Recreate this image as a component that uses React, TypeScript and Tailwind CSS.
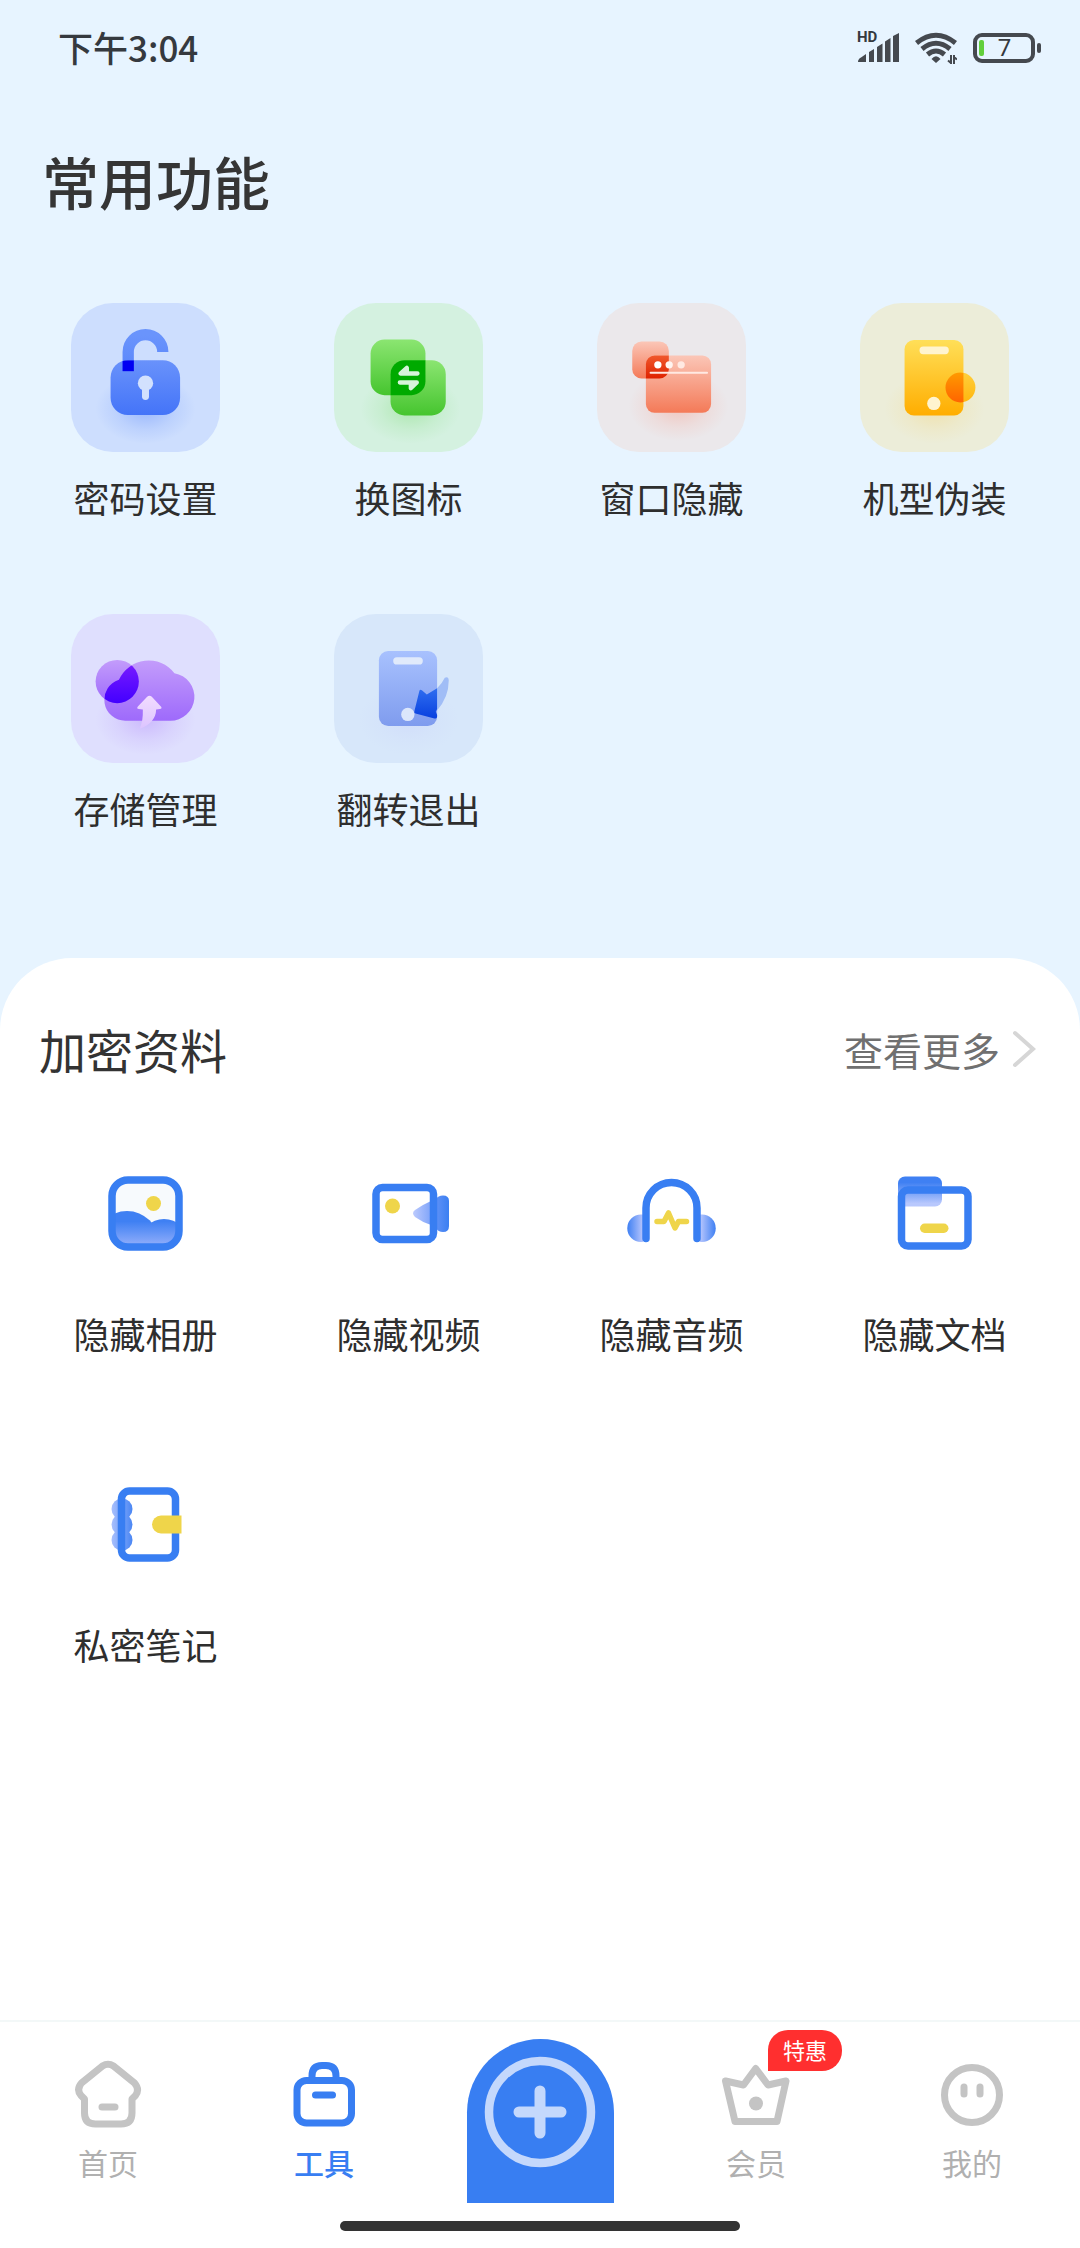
import type { ReactNode } from "react";

const BLUE = "#387ef2";
const YELLOW = "#efd54a";

function Gradient({ id, from, to, horizontal = false }: { id: string; from: string; to: string; horizontal?: boolean }) {
  return (
    <linearGradient id={id} x1="0" y1="0" x2={horizontal ? "1" : "0"} y2={horizontal ? "0" : "1"}>
      <stop offset="0" stopColor={from} />
      <stop offset="1" stopColor={to} />
    </linearGradient>
  );
}

function Glow({ id, color, cx = 224, cy = 318 }: { id: string; color: string; cx?: number; cy?: number }) {
  return (
    <>
      <radialGradient id={id}>
        <stop offset="0" stopColor={color} stopOpacity="0.45" />
        <stop offset="0.6" stopColor={color} stopOpacity="0.14" />
        <stop offset="1" stopColor={color} stopOpacity="0" />
      </radialGradient>
      <ellipse cx={cx} cy={cy} rx="150" ry="105" fill={`url(#${id})`} />
    </>
  );
}

function TileSvg({ children }: { children: ReactNode }) {
  return (
    <svg viewBox="0 0 448 448" className="size-full" aria-hidden="true">
      {children}
    </svg>
  );
}

function LockIcon() {
  return (
    <TileSvg>
      <Glow id="lk-glow" color="#5b88fa" />
      <defs>
        <Gradient id="lk-ring" from="#6a94fc" to="#5a86fb" />
        <Gradient id="lk-body" from="#6992fb" to="#4474f8" />
        <clipPath id="lk-clip">
          <rect x="119" y="172" width="209" height="165" rx="52" />
        </clipPath>
      </defs>
      <path d="M172 205 V147 A52 52 0 0 1 276 147" fill="none" stroke="url(#lk-ring)" strokeWidth="34" />
      <rect x="119" y="172" width="209" height="165" rx="52" fill="url(#lk-body)" />
      <rect x="155" y="172" width="34" height="33" fill="#0000f2" clipPath="url(#lk-clip)" />
      <circle cx="224" cy="241" r="23" fill="#d2e1fe" />
      <path d="M224 245 V281" stroke="#d2e1fe" strokeWidth="21" strokeLinecap="round" />
    </TileSvg>
  );
}

function SwapIcon() {
  return (
    <TileSvg>
      <Glow id="sw-glow" color="#7ddb74" cx={230} />
      <defs>
        <Gradient id="sw-a" from="#8be571" to="#46c52f" />
      </defs>
      <rect x="110" y="110" width="165" height="167" rx="42" fill="url(#sw-a)" />
      <rect x="170" y="172" width="166" height="166" rx="42" fill="url(#sw-a)" />
      <path d="M170 214 A42 42 0 0 1 212 172 H275 V235 A42 42 0 0 1 233 277 H170 Z" fill="#00aa00" />
      <path
        d="M251 212 H200 L219 195 V212 M198 239 H249 L231 256 V239"
        fill="#d6f4da"
        stroke="#d6f4da"
        strokeWidth="13"
        strokeLinecap="round"
        strokeLinejoin="round"
      />
    </TileSvg>
  );
}

function WindowIcon() {
  return (
    <TileSvg>
      <Glow id="wi-glow" color="#f79a86" cx={245} cy={310} />
      <defs>
        <Gradient id="wi-a" from="#fbc6b7" to="#f47a58" />
        <Gradient id="wi-b" from="#f0582c" to="#df2200" />
      </defs>
      <rect x="106" y="116" width="110" height="111" rx="28" fill="url(#wi-a)" />
      <rect x="147" y="158" width="196" height="172" rx="26" fill="url(#wi-a)" />
      <path d="M147 184 A26 26 0 0 1 173 158 H216 V199 A28 28 0 0 1 188 227 H147 Z" fill="url(#wi-b)" />
      <circle cx="183" cy="186" r="11" fill="#fff" />
      <circle cx="217" cy="186" r="11" fill="#fff4f0" />
      <circle cx="253" cy="186" r="11" fill="#ffe9e2" />
      <path d="M161 210 H331" stroke="#ffe9e2" strokeWidth="6" strokeLinecap="round" />
    </TileSvg>
  );
}

function PhoneIcon() {
  return (
    <TileSvg>
      <Glow id="ph-glow" color="#f3d478" />
      <defs>
        <Gradient id="ph-a" from="#ffdf58" to="#ffad00" />
        <Gradient id="ph-b" from="#ffce3c" to="#ffb70e" />
        <Gradient id="ph-c" from="#ff9a00" to="#ff6400" />
        <clipPath id="ph-clip">
          <rect x="134" y="111" width="177" height="227" rx="28" />
        </clipPath>
      </defs>
      <rect x="134" y="111" width="177" height="227" rx="28" fill="url(#ph-a)" />
      <rect x="179" y="131" width="88" height="23" rx="11" fill="#fff4cf" />
      <circle cx="222" cy="302" r="20" fill="#fff4cf" />
      <circle cx="302" cy="254" r="45" fill="url(#ph-b)" />
      <circle cx="302" cy="254" r="45" fill="url(#ph-c)" clipPath="url(#ph-clip)" />
    </TileSvg>
  );
}

function CloudIcon() {
  const cloud = "M164 321 A63 63 0 0 1 144 198 A98 98 0 0 1 311 178 A72 72 0 0 1 298 321 Z";
  return (
    <TileSvg>
      <Glow id="cl-glow" color="#b48cfb" />
      <defs>
        <Gradient id="cl-a" from="#c39cfb" to="#9e6afb" />
        <Gradient id="cl-b" from="#7d1dff" to="#4300ff" />
        <Gradient id="cl-c" from="#f2dcff" to="#dcc4ff" />
        <clipPath id="cl-clip">
          <path d={cloud} />
        </clipPath>
      </defs>
      <circle cx="139" cy="203" r="65" fill="url(#cl-a)" />
      <path d={cloud} fill="url(#cl-a)" />
      <circle cx="139" cy="203" r="65" fill="url(#cl-b)" clipPath="url(#cl-clip)" />
      <path
        d="M229 249 Q236 242 243 249 L271 279 Q275 285 267 286 L256 287 Q255 327 207 345 Q217 320 216 287 L204 286 Q196 284 201 278 Z"
        fill="url(#cl-c)"
      />
    </TileSvg>
  );
}

function FlipIcon() {
  return (
    <TileSvg>
      <Glow id="fl-glow" color="#c9d2fb" />
      <defs>
        <Gradient id="fl-a" from="#a8c1fe" to="#7f9cee" />
        <Gradient id="fl-b" from="#2f6ef0" to="#0940df" />
      </defs>
      <rect x="135" y="111" width="175" height="226" rx="28" fill="url(#fl-a)" />
      <rect x="178" y="130" width="89" height="22" rx="11" fill="#e0eafb" />
      <circle cx="222" cy="302" r="20" fill="#dbe6fb" />
      <path d="M310 223 Q326 208 333 192 Q344 186 345 200 Q345 250 310 290 Z" fill="#a0bdf6" />
      <path
        d="M257 230 Q260 226 265 230 L279 242 L310 223 V286 L306 294 L310 304 Q311 317 302 314 L245 299 Q239 297 242 291 Z"
        fill="url(#fl-b)"
      />
    </TileSvg>
  );
}

function LineSvg({ children }: { children: ReactNode }) {
  return (
    <svg viewBox="0 0 149 149" className="size-full" fill="none" aria-hidden="true">
      {children}
    </svg>
  );
}

function PhotoIcon() {
  return (
    <LineSvg>
      <defs>
        <linearGradient id="pt-a" gradientUnits="userSpaceOnUse" x1="0" y1="72" x2="0" y2="107">
          <stop offset="0.3" stopColor="#3f80f3" />
          <stop offset="1" stopColor="#93affb" />
        </linearGradient>
        <clipPath id="pt-clip">
          <rect x="42" y="42" width="66" height="66" rx="14" />
        </clipPath>
      </defs>
      <rect x="41" y="41" width="67" height="67" rx="16" fill="#f7fafd" />
      <g clipPath="url(#pt-clip)" fill="url(#pt-a)">
        <circle cx="93" cy="104" r="24" />
        <circle cx="56" cy="104" r="32" />
      </g>
      <circle cx="82.5" cy="64.5" r="7.5" fill={YELLOW} />
      <rect x="41" y="41" width="67" height="67" rx="16" stroke={BLUE} strokeWidth="7.5" />
    </LineSvg>
  );
}

function VideoIcon() {
  return (
    <LineSvg>
      <defs>
        <Gradient id="vd-a" from="#bccafd" to="#7fa4f9" horizontal />
        <Gradient id="vd-b" from="#5f91f6" to="#3a7ff2" horizontal />
      </defs>
      <path d="M97 62 Q88 66 81 71 Q77 74 81 78 Q88 83 97 86 Z" fill="url(#vd-a)" />
      <path d="M102 60 Q104 56.500 109 56.500 Q115 56.500 115 62 V87 Q115 93 109 93 Q104 93 102 89 Z" fill="url(#vd-b)" />
      <circle cx="58.500" cy="67" r="7.500" fill={YELLOW} />
      <rect x="42" y="48.500" width="57.500" height="52" rx="6.500" stroke={BLUE} strokeWidth="7.500" />
    </LineSvg>
  );
}

function AudioIcon() {
  return (
    <LineSvg>
      <defs>
        <Gradient id="au-a" from="#3f80f3" to="#b8c6fd" horizontal />
        <Gradient id="au-b" from="#b8c6fd" to="#3f80f3" horizontal />
      </defs>
      <path d="M46 75.500 H44 A13.700 13.700 0 0 0 44 103 H46 Z" fill="url(#au-a)" />
      <path d="M103 75.500 H105 A13.700 13.700 0 0 1 105 103 H103 Z" fill="url(#au-b)" />
      <path d="M49 99.500 V69 A25.500 25.500 0 0 1 100 69 V99.500" stroke={BLUE} strokeWidth="7.500" strokeLinecap="round" />
      <path
        d="M60 82.500 H67 L71.500 74 L78 89 L81.500 82.500 H89.500"
        stroke={YELLOW}
        strokeWidth="5.500"
        strokeLinecap="round"
        strokeLinejoin="round"
      />
    </LineSvg>
  );
}

function FolderIcon() {
  return (
    <LineSvg>
      <defs>
        <linearGradient id="fo-a" x1="0" y1="0" x2="0" y2="1">
          <stop offset="0.2" stopColor="#3f80f3" />
          <stop offset="0.9" stopColor="#b8c8fd" />
        </linearGradient>
      </defs>
      <rect x="38" y="37.500" width="44" height="30" rx="7" fill="url(#fo-a)" />
      <rect x="41.500" y="51" width="66.500" height="56" rx="6.500" stroke={BLUE} strokeWidth="7.500" />
      <rect x="60" y="84.500" width="28.500" height="9.500" rx="4.700" fill={YELLOW} />
    </LineSvg>
  );
}

function NotebookIcon() {
  return (
    <LineSvg>
      <defs>
        <Gradient id="nb-a" from="#a9c0fc" to="#4a86f4" horizontal />
      </defs>
      <circle cx="51" cy="59" r="10.500" fill="url(#nb-a)" />
      <circle cx="51" cy="74.500" r="10.500" fill="url(#nb-a)" />
      <circle cx="51" cy="90" r="10.500" fill="url(#nb-a)" />
      <rect x="50.500" y="41" width="54" height="67" rx="8" stroke={BLUE} strokeWidth="7.500" />
      <path d="M110.500 65.500 V83.500 H90 A9 9 0 0 1 90 65.500 Z" fill={YELLOW} />
    </LineSvg>
  );
}

function TabSvg({ children }: { children: ReactNode }) {
  return (
    <svg
      viewBox="0 0 72 72"
      className="size-[72px]"
      fill="none"
      stroke="currentColor"
      strokeWidth="7"
      strokeLinecap="round"
      strokeLinejoin="round"
      aria-hidden="true"
    >
      {children}
    </svg>
  );
}

function HomeTabIcon() {
  return (
    <TabSvg>
      <path d="M30.500 10 Q36 6.500 41.500 10 L62.500 27 Q68 33.500 63.500 39.500 L60 43 V57 Q60 68 49 68 H23.500 Q12.500 68 12.500 57 V43 L9 39.500 Q4 33.500 9.500 27 Z" />
      <path d="M30 51 H43" />
    </TabSvg>
  );
}

function ToolTabIcon() {
  return (
    <TabSvg>
      <rect x="9" y="24.500" width="54.500" height="42.500" rx="9.500" />
      <path d="M24 23 V20 Q24 9.500 34 9.500 H38 Q48 9.500 48 20 V23" />
      <path d="M27.500 39 H44.500" />
    </TabSvg>
  );
}

function VipTabIcon() {
  return (
    <TabSvg>
      <path d="M5.500 25 L23.500 29 L35.700 12.500 L48 29 L66 25 L57 65.500 H15 Z" />
      <circle cx="36" cy="47.500" r="7" fill="currentColor" stroke="none" />
    </TabSvg>
  );
}

function MeTabIcon() {
  return (
    <TabSvg>
      <circle cx="36" cy="39" r="27.500" />
      <path d="M28 31 V38 M44 31 V38" />
    </TabSvg>
  );
}

function Entry({ icon, label, tile = "" }: { icon: ReactNode; label: string; tile?: string }) {
  return (
    <button type="button" className="flex flex-col items-center gap-[25px]">
      <span className={`size-[149px] overflow-hidden rounded-[42px] ${tile}`}>{icon}</span>
      <span className="text-[36px] leading-10 text-[#2e2e2e]">{label}</span>
    </button>
  );
}

function Tab({ icon, label, active = false, badge }: { icon: ReactNode; label: string; active?: boolean; badge?: string }) {
  return (
    <button
      type="button"
      aria-current={active ? "page" : undefined}
      className={`relative flex flex-col items-center gap-[14px] pt-[34px] ${active ? "text-[#387ef2]" : "text-[#c4c4c4]"}`}
    >
      {icon}
      <span className={`text-[30px] leading-10 ${active ? "font-medium" : "text-[#b0b0b0]"}`}>{label}</span>
      {badge && (
        <span className="absolute top-2 left-1/2 ml-3 rounded-[20px] rounded-bl-none bg-[#ff2f2f] px-[15px] pb-[3px] text-[22px] leading-[38px] text-white">
          {badge}
        </span>
      )}
    </button>
  );
}

function StatusBar() {
  return (
    <header className="flex h-24 items-center justify-between pr-[39px] pl-[58px] text-[#35393e]">
      <time className="pb-[3px] text-[35px] leading-10 font-medium">下午3:04</time>
      <div className="flex items-center gap-4">
        <span className="relative block h-8 w-[42px]">
          <span className="absolute -top-1 left-0 font-[Roboto] text-[15px] leading-[18px] font-bold">HD</span>
          <svg viewBox="0 0 42 32" className="h-8 w-[42px]" fill="#45494f" aria-hidden="true">
            <path d="M1 30 Q1 27 4 25.500 L9 22 V30 Z M12 30 V20 L17 17 V30 Z M20 30 V15 L25.500 11.500 V30 Z M28 30 V9.500 L33.500 6 V30 Z M36 30 V4 L42 1 V30 Z" />
          </svg>
        </span>
        <svg viewBox="0 0 42 32" className="h-8 w-[42px]" fill="none" stroke="#45494f" strokeWidth="5" aria-hidden="true">
          <path d="M1.500 11 Q21 -4.500 40.500 11" />
          <path d="M7 17 Q21 5.500 35 17" />
          <path d="M12.500 22.500 Q21 15.500 29.500 22.500" />
          <path d="M21 31 L16.500 27 Q21 21.500 25.500 27 Z" fill="#45494f" stroke="none" />
          <path d="M36 23 V32 M33 28.500 L36 31 M39 23 V32 M39 25 L42 27.500" strokeWidth="2" />
        </svg>
        <div className="flex items-center gap-0.5">
          <span className="flex h-[30px] w-[62px] items-center rounded-[9px] border-4 border-[#45494f] px-[2px]">
            <span className="h-4 w-[5px] rounded-xs bg-[#62cf3c]" />
            <span className="flex-1 pr-1 text-center font-[Roboto] text-[24px] leading-5">7</span>
          </span>
          <span className="h-[10px] w-1 rounded-xs bg-[#45494f]" />
        </div>
      </div>
    </header>
  );
}

export default function App() {
  return (
    <div className="flex min-h-screen flex-col bg-[#e7f4ff] font-['Noto_Sans_CJK_SC',sans-serif]">
      <StatusBar />

      <section className="px-[14px] pt-11 pb-[130px]">
        <h1 className="pl-[28px] text-[57px] leading-[80px] font-medium text-[#353535]">常用功能</h1>
        <div className="mt-[83px] grid grid-cols-4 gap-y-[97px]">
          <Entry icon={<LockIcon />} label="密码设置" tile="bg-[#cddefe]" />
          <Entry icon={<SwapIcon />} label="换图标" tile="bg-[#d4f1e0]" />
          <Entry icon={<WindowIcon />} label="窗口隐藏" tile="bg-[#ebe8eb]" />
          <Entry icon={<PhoneIcon />} label="机型伪装" tile="bg-[#ecedd9]" />
          <Entry icon={<CloudIcon />} label="存储管理" tile="bg-[#dfdffe]" />
          <Entry icon={<FlipIcon />} label="翻转退出" tile="bg-[#d7e7fa]" />
        </div>
      </section>

      <main className="flex-1 rounded-t-[72px] bg-white px-[14px] pt-[59px] pb-20">
        <div className="flex items-center justify-between pr-[30px] pl-[25px]">
          <h2 className="text-[47px] leading-[64px] text-[#333333]">加密资料</h2>
          <a href="#more" className="flex items-center gap-3 text-[39px] leading-[64px] text-[#707070]">
            查看更多
            <svg viewBox="0 0 24 38" className="h-[38px] w-6" fill="none" stroke="#d6d6d6" strokeWidth="4" strokeLinecap="round" aria-hidden="true">
              <path d="M3 3 L21 19 L3 35" />
            </svg>
          </a>
        </div>
        <div className="mt-[58px] grid grid-cols-4 gap-y-[97px]">
          <Entry icon={<PhotoIcon />} label="隐藏相册" />
          <Entry icon={<VideoIcon />} label="隐藏视频" />
          <Entry icon={<AudioIcon />} label="隐藏音频" />
          <Entry icon={<FolderIcon />} label="隐藏文档" />
          <Entry icon={<NotebookIcon />} label="私密笔记" />
        </div>
      </main>

      <footer className="border-t-2 border-[#f3f8f8] bg-white pb-[17px]">
        <nav className="grid grid-cols-5 items-start">
          <Tab icon={<HomeTabIcon />} label="首页" />
          <Tab icon={<ToolTabIcon />} label="工具" active />
          <button
            type="button"
            aria-label="添加"
            className="mt-[17px] flex h-[164px] w-[147px] justify-center justify-self-center rounded-t-full bg-[#387ef2] pt-[17px]"
          >
            <svg viewBox="0 0 112 112" className="size-28" fill="none" stroke="#c4d8fc" aria-hidden="true">
              <circle cx="56" cy="56" r="51" strokeWidth="8.500" />
              <path d="M35 56 H77 M56 35 V77" strokeWidth="11" strokeLinecap="round" />
            </svg>
          </button>
          <Tab icon={<VipTabIcon />} label="会员" badge="特惠" />
          <Tab icon={<MeTabIcon />} label="我的" />
        </nav>
        <div className="mx-auto mt-[18px] h-[10px] w-[400px] rounded-full bg-[#333333]" />
      </footer>
    </div>
  );
}
